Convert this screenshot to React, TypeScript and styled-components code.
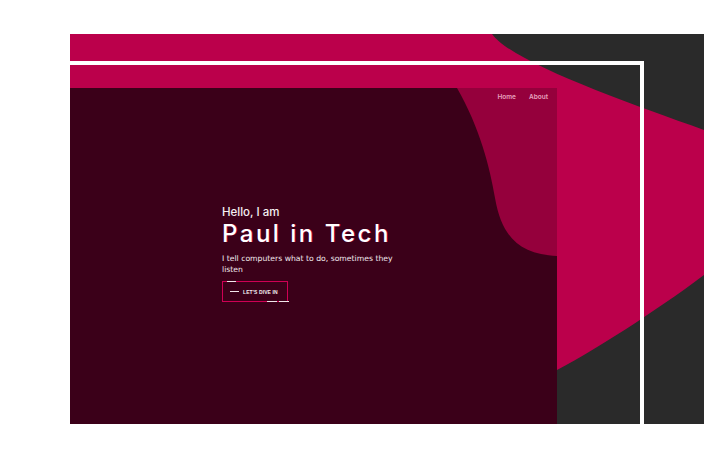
import styled, { createGlobalStyle } from "styled-components";

const GlobalStyle = createGlobalStyle`
  html, body {
    margin: 0;
    padding: 0;
    background: #ffffff;
  }
  body {
    font-family: "Inter", "Liberation Sans", sans-serif;
  }
`;

const Stage = styled.div`
  position: relative;
  margin: 34px 0 0 70px;
  width: 634px;
  height: 390px;
  padding-top: 54px;
  box-sizing: border-box;
  background: #2a2a2a;
  overflow: hidden;
`;

const Backdrop = styled.svg`
  position: absolute;
  inset: 0;
  width: 100%;
  height: 100%;
`;

const Frame = styled.div`
  position: absolute;
  top: 27px;
  right: 60px;
  left: -10px;
  bottom: -10px;
  border: 4px solid #ffffff;
  pointer-events: none;
`;

const Hero = styled.section`
  position: relative;
  width: 487px;
  height: 336px;
  display: flex;
  flex-direction: column;
  background: #3b0019;
  overflow: hidden;
`;

const Wave = styled.svg`
  position: absolute;
  inset: 0;
  width: 100%;
  height: 100%;
`;

const Nav = styled.nav`
  position: relative;
  display: flex;
  justify-content: flex-end;
  gap: 13px;
  padding: 5px 9px 0;
`;

const NavLink = styled.a`
  font-size: 6.5px;
  line-height: 8px;
  font-weight: 600;
  color: #e7a2bf;
  text-decoration: none;
`;

const Intro = styled.div`
  position: relative;
  margin: 104px 0 0 152px;
  width: 186px;
  display: flex;
  flex-direction: column;
  align-items: flex-start;
`;

const Greeting = styled.div`
  font-size: 11.5px;
  line-height: 14px;
  font-weight: 500;
  color: #f4f0f2;
`;

const Title = styled.h1`
  margin: 3px 0 0;
  font-size: 24px;
  line-height: 24px;
  font-weight: 500;
  letter-spacing: 2.5px;
  white-space: nowrap;
  color: #ffffff;
  text-shadow: 0.7px 0.4px 0 rgba(214, 0, 90, 0.8);
`;

const Tagline = styled.p`
  margin: 8px 0 0;
  font-family: "DejaVu Sans", sans-serif;
  font-size: 7.7px;
  line-height: 10.6px;
  color: #f1e9ed;
`;

const DiveButton = styled.button`
  position: relative;
  margin-top: 6px;
  width: 66px;
  height: 21px;
  padding: 0 0 0 7px;
  display: flex;
  align-items: center;
  gap: 4px;
  background: transparent;
  border: 1px solid #cf0054;
  box-sizing: border-box;
  cursor: pointer;

  &::before,
  &::after {
    content: "";
    position: absolute;
    height: 1px;
    background: #f2e6eb;
  }
  &::before {
    top: -1px;
    left: 4px;
    width: 9px;
  }
  &::after {
    bottom: -1px;
    right: 10px;
    width: 10px;
    box-shadow: 12px 0 0 0 #f2e6eb;
  }
`;

const Dash = styled.span`
  width: 9px;
  height: 1px;
  background: #f2e6eb;
`;

const ButtonLabel = styled.span`
  font-size: 5px;
  font-weight: 800;
  letter-spacing: 0.1px;
  color: #f4eef1;
  white-space: nowrap;
`;

export default function App() {
  return (
    <>
      <GlobalStyle />
      <Stage>
        <Backdrop viewBox="0 0 634 390" preserveAspectRatio="none">
          <path
            d="M0,0 L422,0 C442,28 555,68 634,96 L700,118 L700,190 L634,241 C604,264 530,314 487,336 L300,420 L0,420 Z"
            fill="#bb004b"
          />
        </Backdrop>
        <Frame />
        <Hero>
          <Wave viewBox="0 0 487 336" preserveAspectRatio="none">
            <path
              d="M387,0 C410,40 420,80 425,110 C432,150 450,166 487,168 L487,0 Z"
              fill="#95003c"
            />
          </Wave>
          <Nav>
            <NavLink href="#">Home</NavLink>
            <NavLink href="#">About</NavLink>
          </Nav>
          <Intro>
            <Greeting>Hello, I am</Greeting>
            <Title>Paul in Tech</Title>
            <Tagline>I tell computers what to do, sometimes they listen</Tagline>
            <DiveButton>
              <Dash />
              <ButtonLabel>LET'S DIVE IN</ButtonLabel>
            </DiveButton>
          </Intro>
        </Hero>
      </Stage>
    </>
  );
}
